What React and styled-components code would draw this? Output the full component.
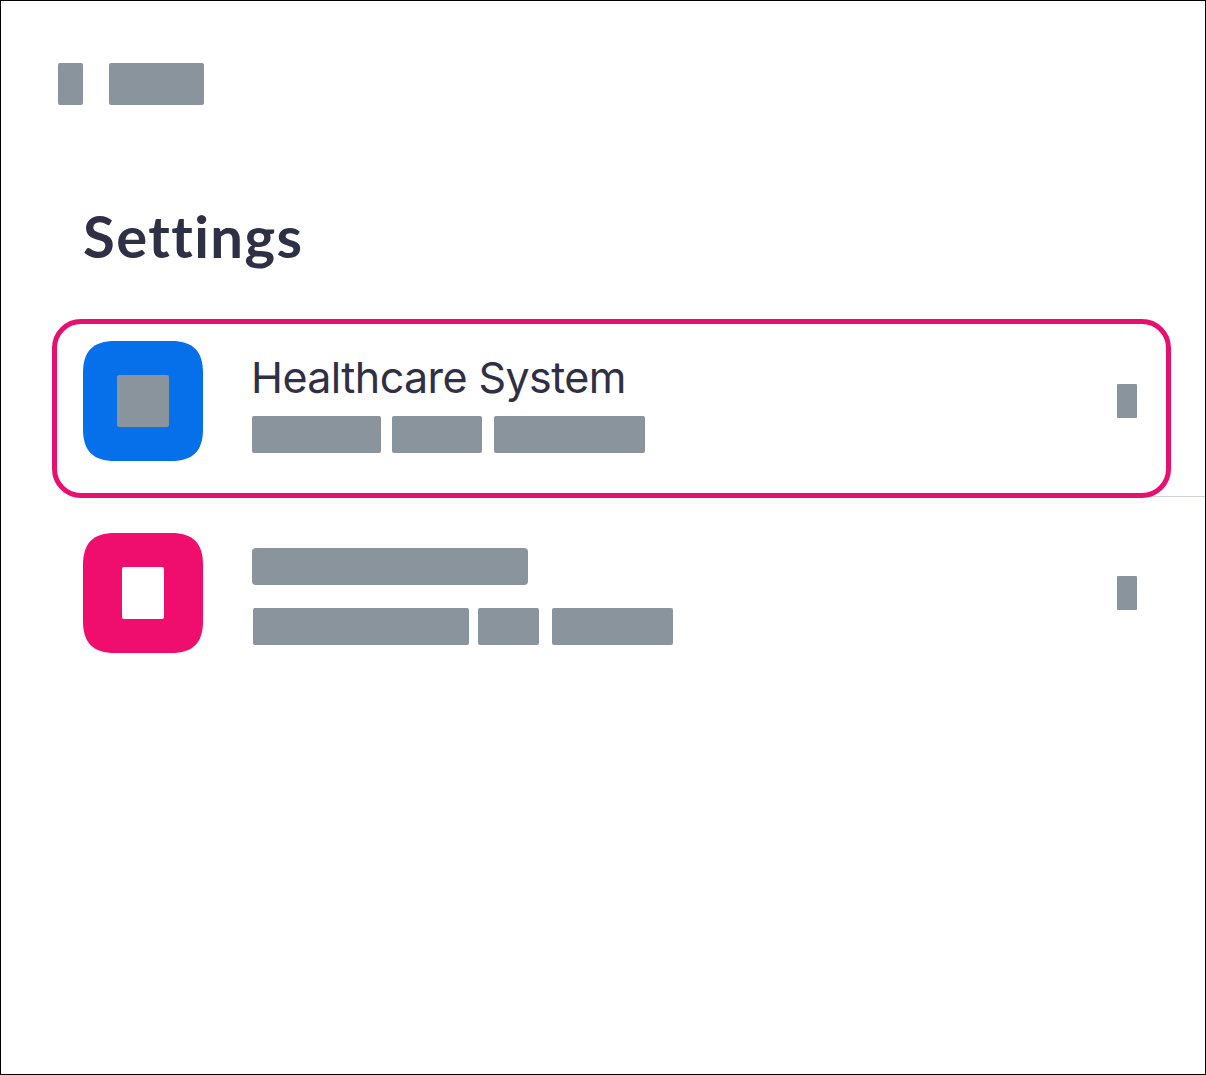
import React from "react";
import styled, { createGlobalStyle } from "styled-components";

const Global = createGlobalStyle`
  html, body { margin: 0; padding: 0; background: #fff; }
  * { box-sizing: border-box; }
`;

const Frame = styled.div`
  width: 1206px;
  height: 1075px;
  border: 1px solid #000;
  background: #fff;
  font-family: "Lato", "Liberation Sans", sans-serif;
  color: #2f2f45;
  overflow: hidden;
`;

const TopBar = styled.header`
  display: flex;
  gap: 26px;
  padding: 62px 0 0 57px;
`;

const Redaction = styled.span`
  display: block;
  flex: none;
  width: ${(p) => p.$w}px;
  height: ${(p) => p.$h || 37}px;
  margin-left: ${(p) => p.$ml || 0}px;
  background: #89949d;
  border-radius: ${(p) => p.$r || 2}px;
`;

const Heading = styled.h1`
  margin: 99px 0 0 82px;
  height: 64px;
  font-size: 58px;
  line-height: 64px;
  font-weight: 700;
  letter-spacing: 1.4px;
  font-variant-ligatures: none;
`;

const List = styled.div`
  margin-top: 37px;
`;

const Row = styled.div`
  position: relative;
  display: flex;
  align-items: flex-start;
  height: 192px;
  padding: 36px 68px 0 82px;

  ${(p) =>
    p.$divider &&
    `&::after {
      content: "";
      position: absolute;
      left: 82px;
      right: 0;
      bottom: 0;
      height: 1px;
      background: #cfd3d6;
    }`}
`;

const Highlight = styled.div`
  position: absolute;
  z-index: 1;
  left: 51px;
  top: 14px;
  width: 1119px;
  height: 179px;
  border: 5px solid #e5106f;
  border-radius: 29px;
  pointer-events: none;
`;

const Tile = styled.div`
  flex: none;
  width: 120px;
  height: 120px;
  display: flex;
  align-items: center;
  justify-content: center;
  background: ${(p) => p.$bg};
  clip-path: path("M32 0H88C110 0 120 10 120 32V88C120 110 110 120 88 120H32C10 120 0 110 0 88V32C0 10 10 0 32 0Z");
`;

const Glyph = styled.span`
  display: block;
  width: ${(p) => p.$w}px;
  height: 52px;
  background: ${(p) => p.$c};
  border-radius: 2px;
`;

const Body = styled.div`
  flex: 1;
  margin-left: 49px;
  min-width: 0;
`;

const Title = styled.div`
  height: 39px;
  margin-left: -1px;
  font-family: "Inter", "Liberation Sans", sans-serif;
  font-size: 43px;
  line-height: 39px;
  font-weight: 400;
  letter-spacing: -0.58px;
  white-space: nowrap;
`;

const TitleBar = styled.div`
  padding-top: ${(p) => p.$top}px;
  height: ${(p) => p.$height}px;
`;

const Meta = styled.div`
  display: flex;
  margin-left: ${(p) => p.$ml || 0}px;
`;

const Chevron = styled.span`
  display: block;
  flex: none;
  width: 20px;
  height: 34px;
  margin-top: 7px;
  background: #89949d;
  border-radius: 1px;
`;

const ChevronSlot = styled.div`
  flex: none;
  padding-top: 36px;
`;

export default function App() {
  return (
    <Frame>
      <Global />
      <TopBar>
        <Redaction $w={25} $h={42} />
        <Redaction $w={95} $h={42} />
      </TopBar>
      <Heading>Settings</Heading>
      <List>
        <Row $divider>
          <Tile $bg="#0570ea">
            <Glyph $w={52} $c="#89949d" />
          </Tile>
          <Body>
            <TitleBar $top={17} $height={75}>
              <Title>Healthcare System</Title>
            </TitleBar>
            <Meta>
              <Redaction $w={129} />
              <Redaction $w={90} $ml={11} />
              <Redaction $w={151} $ml={12} />
            </Meta>
          </Body>
          <ChevronSlot>
            <Chevron />
          </ChevronSlot>
          <Highlight />
        </Row>
        <Row>
          <Tile $bg="#ef0d6e">
            <Glyph $w={42} $c="#fff" />
          </Tile>
          <Body>
            <TitleBar $top={15} $height={75}>
              <Redaction $w={276} $r={4} />
            </TitleBar>
            <Meta $ml={1}>
              <Redaction $w={216} />
              <Redaction $w={61} $ml={9} />
              <Redaction $w={121} $ml={13} />
            </Meta>
          </Body>
          <ChevronSlot>
            <Chevron />
          </ChevronSlot>
        </Row>
      </List>
    </Frame>
  );
}
